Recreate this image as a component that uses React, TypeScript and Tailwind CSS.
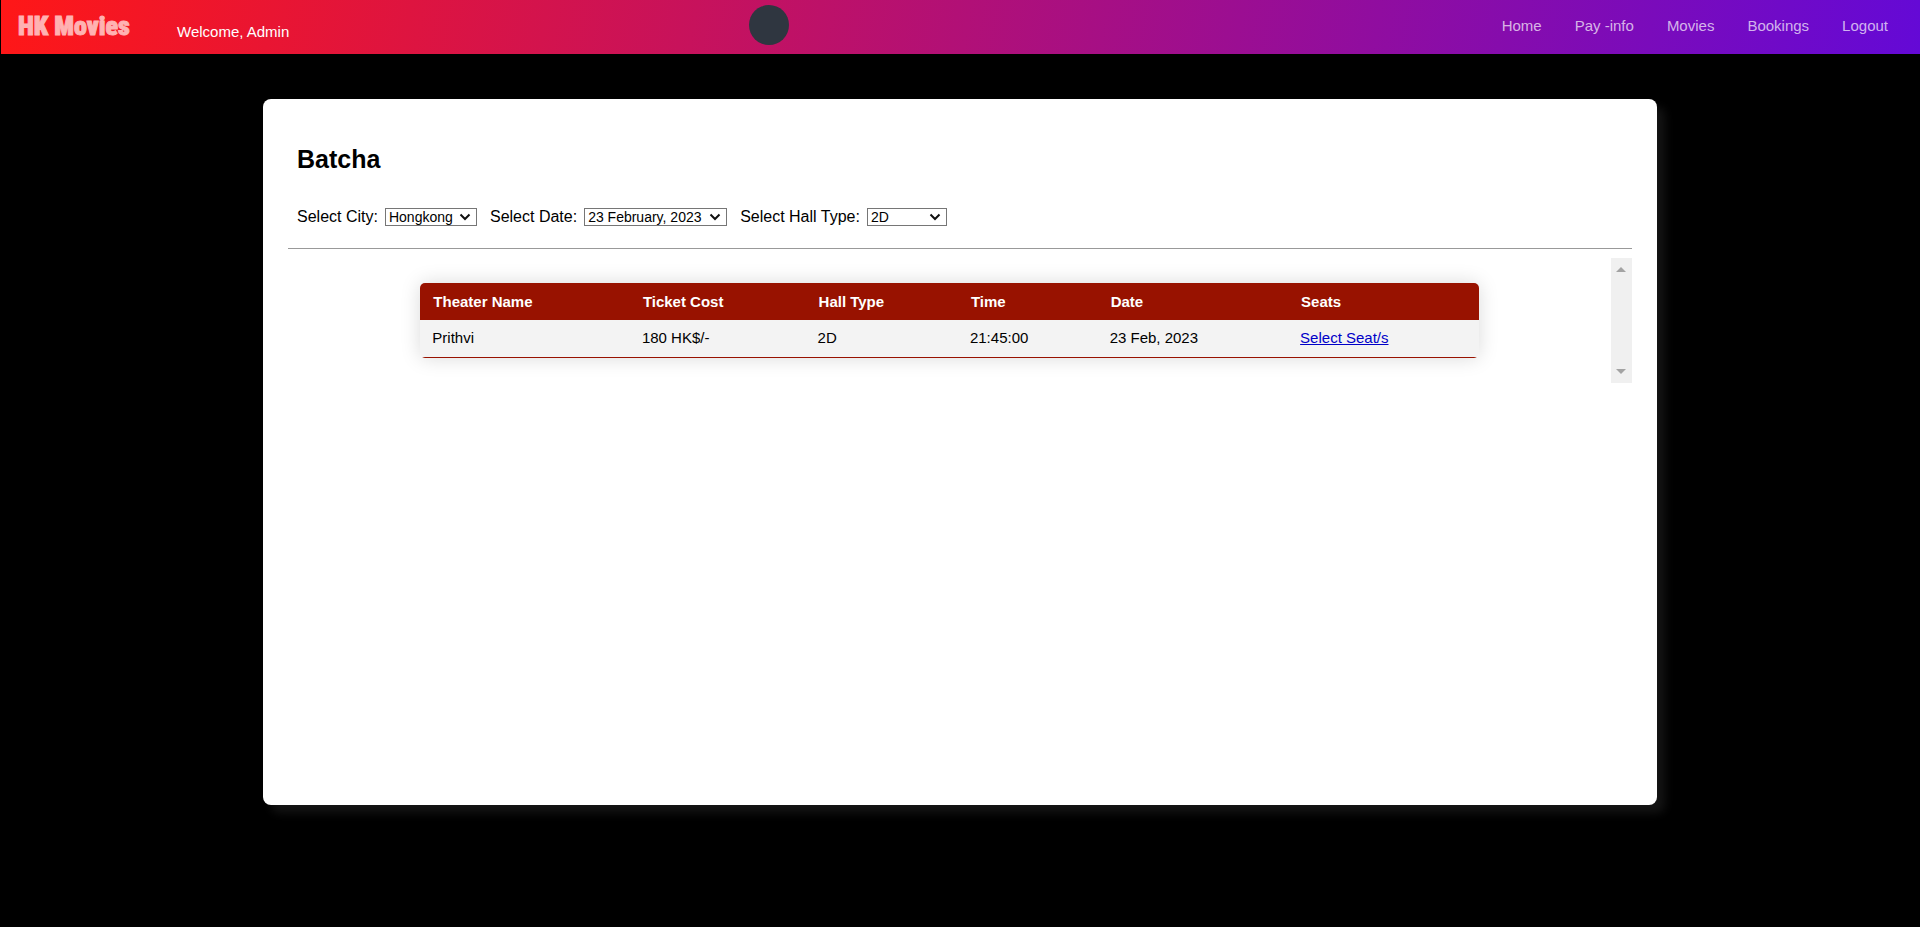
import type { ReactNode } from "react";

const links = ["Home", "Pay -info", "Movies", "Bookings", "Logout"];

const columns = [
  { name: "Theater Name", width: "w-[19.8%]" },
  { name: "Ticket Cost", width: "w-[16.6%]" },
  { name: "Hall Type", width: "w-[14.4%]" },
  { name: "Time", width: "w-[13.2%]" },
  { name: "Date", width: "w-[18%]" },
  { name: "Seats", width: "w-[18%]" },
];

function Header() {
  return (
    <header className="ml-px flex h-[54px] items-center bg-linear-[100deg,#ff1717,#6409d6] pr-8 pl-[17px] text-[15px]">
      <div className="flex w-[39.1%] items-center">
        <a
          href="#home"
          className="w-[159px] pb-[2px] font-[Impact,'Roboto_Condensed','Open_Sans_Condensed','Noto_Sans_Condensed','Liberation_Sans',sans-serif] text-[26px] leading-8 font-black text-[#ffb2b2] [-webkit-text-stroke:1px_#ffb2b2]"
        >
          HK Movies
        </a>
        <span className="pt-[10px] leading-5 text-white">Welcome, Admin</span>
      </div>
      <button type="button" aria-label="Search" className="mb-1 size-10 rounded-full bg-[#2f3640]" />
      <nav className="mb-[2px] ml-auto flex gap-[33px] text-white/70">
        {links.map((link) => (
          <a key={link} href={`#${link.toLowerCase()}`}>
            {link}
          </a>
        ))}
      </nav>
    </header>
  );
}

function Picker({ id, label, options, width }: { id: string; label: string; options: string[]; width: string }) {
  return (
    <div className="flex items-center gap-[7px]">
      <label htmlFor={id}>{label}</label>
      <div className={`grid ${width}`}>
        <select
          id={id}
          className="col-start-1 row-start-1 h-[18px] w-full appearance-none border border-[#767676] bg-white pl-[3px] text-[14px] leading-4"
        >
          {options.map((option) => (
            <option key={option}>{option}</option>
          ))}
        </select>
        <svg
          viewBox="0 0 12 8"
          className="pointer-events-none col-start-1 row-start-1 mr-[6px] h-2 w-3 self-center justify-self-end"
          fill="none"
          stroke="#101010"
          strokeWidth="2"
        >
          <path d="M1.500 1.500 6 6l4.500-4.500" />
        </svg>
      </div>
    </div>
  );
}

function ScrollArea({ children }: { children: ReactNode }) {
  return (
    <div className="flex h-[125px]">
      <div className="flex-1 pt-[25px]">{children}</div>
      <div className="flex w-[21px] flex-col items-center justify-between bg-[#f0f0f0] py-[9px]">
        <svg viewBox="0 0 10 5" className="h-[5px] w-[10px]" fill="#a3a3a3">
          <path d="M0 5 5 0l5 5z" />
        </svg>
        <svg viewBox="0 0 10 5" className="h-[5px] w-[10px]" fill="#a3a3a3">
          <path d="M0 0h10L5 5z" />
        </svg>
      </div>
    </div>
  );
}

export default function App() {
  return (
    <div className="min-h-screen bg-black font-['Liberation_Sans',Arial,sans-serif] text-black">
      <Header />
      <main className="mx-auto mt-[45px] min-h-[706px] w-[72.6%] rounded-[8px] bg-white px-[25px] pt-11 shadow-[8px_8px_10px_#141414]">
        <h1 className="pl-[9px] text-[25px] leading-8 font-bold">Batcha</h1>
        <form className="mt-8 flex gap-[13px] pl-[9px] text-[16px] leading-5">
          <Picker id="city" label="Select City:" options={["Hongkong"]} width="w-[92px]" />
          <Picker id="date" label="Select Date:" options={["23 February, 2023"]} width="w-[143px]" />
          <Picker id="hall" label="Select Hall Type:" options={["2D", "3D"]} width="w-[80px]" />
        </form>
        <hr className="mt-[21px] mb-[9px] border-[#999999]" />
        <ScrollArea>
          <table className="mx-auto w-4/5 table-fixed overflow-hidden rounded-[5px] text-left text-[15px] leading-5 shadow-[0_0_20px_rgba(0,0,0,0.15)]">
            <thead>
              <tr className="h-[37px] bg-[#981200] text-white">
                {columns.map((column) => (
                  <th key={column.name} scope="col" className={`px-[13px] font-bold ${column.width}`}>
                    {column.name}
                  </th>
                ))}
              </tr>
            </thead>
            <tbody>
              <tr className="h-[37px] border-b border-[#981200] bg-[#f3f3f3]">
                <td className="px-3">Prithvi</td>
                <td className="px-3">180 HK$/-</td>
                <td className="px-3">2D</td>
                <td className="px-3">21:45:00</td>
                <td className="px-3">23 Feb, 2023</td>
                <td className="px-3">
                  <a href="#seats" className="text-[#0000c8] underline">
                    Select Seat/s
                  </a>
                </td>
              </tr>
            </tbody>
          </table>
        </ScrollArea>
      </main>
    </div>
  );
}
